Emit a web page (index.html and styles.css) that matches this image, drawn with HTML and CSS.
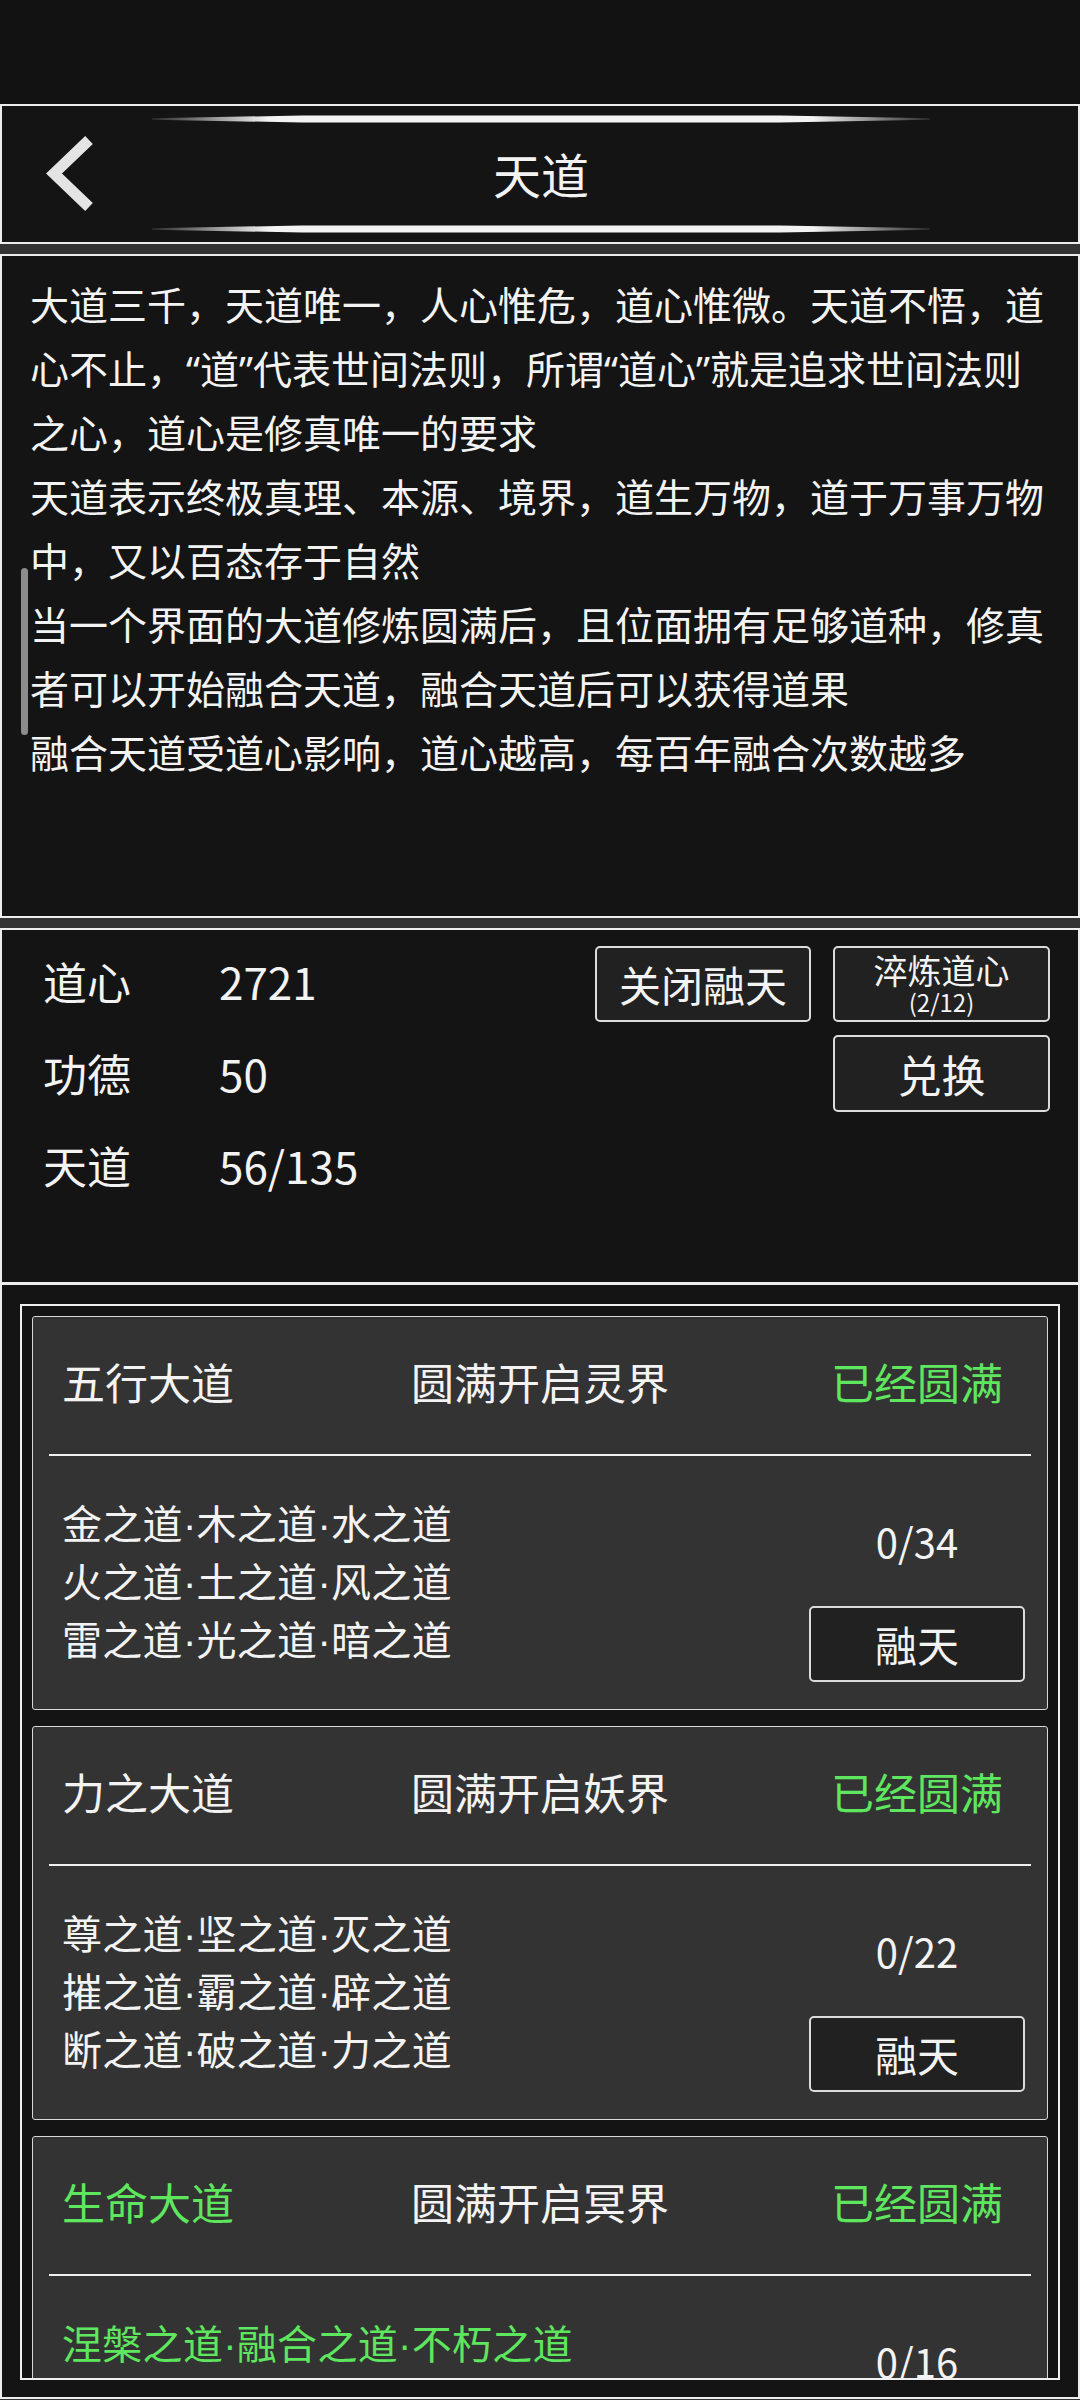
FILE: index.html
```html
<!DOCTYPE html>
<html lang="zh-CN">
  <head>
    <meta charset="utf-8" />
    <title>天道</title>
    <meta name="viewport" content="width=device-width, initial-scale=1" />
    <link rel="stylesheet" href="styles.css">
  </head>
  <body>
    <div class="status-bar"></div>

    <header class="panel title-bar">
      <button class="back" aria-label="返回">
        <svg width="50" height="76" viewBox="0 0 50 76">
          <polyline points="44,4 9,37.5 44,71" fill="none" stroke="#e4e4e4" stroke-width="11" />
        </svg>
      </button>
      <div class="title-center">
        <svg class="glow-line" width="778" height="8" viewBox="0 0 778 8">
          <defs>
            <linearGradient id="glow" x1="0" x2="1" y1="0" y2="0">
              <stop offset="0" stop-color="#fff" stop-opacity="0.1" />
              <stop offset="0.15" stop-color="#fff" stop-opacity="0.95" />
              <stop offset="0.85" stop-color="#fff" stop-opacity="0.95" />
              <stop offset="1" stop-color="#fff" stop-opacity="0.1" />
            </linearGradient>
          </defs>
          <polygon points="0,3.3 150,0.5 628,0.5 778,3.3 778,4.7 628,7.5 150,7.5 0,4.7" fill="url(#glow)" />
        </svg>
        <h1>天道</h1>
        <svg class="glow-line" width="778" height="8" viewBox="0 0 778 8">
          <polygon points="0,3.3 150,0.5 628,0.5 778,3.3 778,4.7 628,7.5 150,7.5 0,4.7" fill="url(#glow)" />
        </svg>
      </div>
    </header>

    <section class="panel lore">
      <p>大道三千，天道唯一，人心惟危，道心惟微。天道不悟，道心不止，“道”代表世间法则，所谓“道心”就是追求世间法则之心，道心是修真唯一的要求</p>
      <p>天道表示终极真理、本源、境界，道生万物，道于万事万物中，又以百态存于自然</p>
      <p>当一个界面的大道修炼圆满后，且位面拥有足够道种，修真者可以开始融合天道，融合天道后可以获得道果</p>
      <p>融合天道受道心影响，道心越高，每百年融合次数越多</p>
      <div class="scroll-thumb"></div>
    </section>

    <section class="panel stats">
      <dl class="stat-list">
        <dt>道心</dt><dd>2721</dd>
        <dt>功德</dt><dd>50</dd>
        <dt>天道</dt><dd>56/135</dd>
      </dl>
      <div class="stat-actions">
        <button class="btn btn-close">关闭融天</button>
        <button class="btn btn-refine"><span>淬炼道心</span><small>(2/12)</small></button>
        <button class="btn btn-exchange">兑换</button>
      </div>
    </section>

    <section class="panel dao-list">
      <div class="dao-frame">
        <div class="dao-card">
          <div class="dao-head">
            <span class="dao-name">五行大道</span>
            <span class="dao-goal">圆满开启灵界</span>
            <span class="dao-state">已经圆满</span>
          </div>
          <div class="dao-rule"></div>
          <div class="dao-body">
            <div class="dao-paths">
              <div>金之道·木之道·水之道</div>
              <div>火之道·土之道·风之道</div>
              <div>雷之道·光之道·暗之道</div>
            </div>
            <div class="dao-side">
              <span class="dao-count">0/34</span>
              <button class="btn btn-fuse">融天</button>
            </div>
          </div>
        </div>

        <div class="dao-card">
          <div class="dao-head">
            <span class="dao-name">力之大道</span>
            <span class="dao-goal">圆满开启妖界</span>
            <span class="dao-state">已经圆满</span>
          </div>
          <div class="dao-rule"></div>
          <div class="dao-body">
            <div class="dao-paths">
              <div>尊之道·坚之道·灭之道</div>
              <div>摧之道·霸之道·辟之道</div>
              <div>断之道·破之道·力之道</div>
            </div>
            <div class="dao-side">
              <span class="dao-count">0/22</span>
              <button class="btn btn-fuse">融天</button>
            </div>
          </div>
        </div>

        <div class="dao-card">
          <div class="dao-head">
            <span class="dao-name is-green">生命大道</span>
            <span class="dao-goal">圆满开启冥界</span>
            <span class="dao-state">已经圆满</span>
          </div>
          <div class="dao-rule"></div>
          <div class="dao-body">
            <div class="dao-paths is-green">
              <div>涅槃之道·融合之道·不朽之道</div>
            </div>
            <div class="dao-side">
              <span class="dao-count">0/16</span>
              <button class="btn btn-fuse">融天</button>
            </div>
          </div>
        </div>
      </div>
    </section>
  </body>
</html>
```

FILE: styles.css
```css
html {
  background: #333;
}

body {
  margin: 0;
  height: 2400px;
  overflow: hidden;
  font-family: "Noto Sans CJK SC", "Noto Sans", sans-serif;
  color: #f3f3f3;
  background: #333;
}

.status-bar {
  height: 104px;
  background: #121212;
}

.panel {
  box-sizing: border-box;
  background: #141414;
  border: 2px solid #ededed;
}

/* header */

.title-bar {
  height: 140px;
  margin-bottom: 10px;
  display: grid;
  grid-template-columns: 150px 778px 1fr;
  align-items: center;
}

.back {
  margin: 0 0 0 43px;
  padding: 0;
  border: 0;
  background: none;
  width: 50px;
  height: 76px;
}

.back svg {
  display: block;
}

.title-center {
  align-self: stretch;
  box-sizing: border-box;
  padding: 9px 0;
  display: flex;
  flex-direction: column;
  justify-content: space-between;
  align-items: center;
}

.glow-line {
  display: block;
}

.title-center h1 {
  margin: 0 0 3px;
  font-size: 48px;
  font-weight: 400;
  line-height: 1;
}

/* description: western font first so the quotes stay narrow */

.lore {
  position: relative;
  height: 664px;
  margin-bottom: 10px;
  padding: 17px 28px 0;
  font-family: "Noto Sans", "Noto Sans CJK SC", sans-serif;
  font-size: 39px;
  line-height: 64px;
}

.lore p {
  margin: 0;
}

.scroll-thumb {
  position: absolute;
  left: 19px;
  top: 312px;
  width: 7px;
  height: 167px;
  border-radius: 4px;
  background: #8c8c8c;
}

/* stats */

.stats {
  height: 356px;
  padding: 9px 28px 0 41px;
  display: flex;
  justify-content: space-between;
  align-items: flex-start;
}

.stat-list {
  margin: -4px 0 0;
  display: grid;
  grid-template-columns: 176px auto;
  grid-auto-rows: 92px;
  align-items: center;
  font-size: 44px;
  line-height: 1;
}

.stat-list dt,
.stat-list dd {
  margin: 0;
}

.stat-actions {
  margin-top: 7px;
  display: grid;
  grid-template-columns: 216px 217px;
  grid-template-rows: 76px 77px;
  column-gap: 22px;
  row-gap: 13px;
}

.btn {
  box-sizing: border-box;
  margin: 0;
  padding: 0;
  border: 2px solid #dcdcdc;
  border-radius: 5px;
  background: #212121;
  color: #f3f3f3;
  font-family: inherit;
  line-height: 1;
  display: flex;
  flex-direction: column;
  align-items: center;
  justify-content: center;
}

.btn-close {
  grid-row: 1;
  grid-column: 1;
  font-size: 42px;
}

.btn-refine {
  grid-row: 1;
  grid-column: 2;
}

.btn-refine span {
  font-size: 34px;
  line-height: 36px;
}

.btn-refine small {
  font-size: 24px;
  line-height: 28px;
}

.btn-exchange {
  grid-row: 2;
  grid-column: 2;
  font-size: 44px;
}

/* dao list */

.dao-list {
  height: 1115px;
  border-top-width: 1px;
  padding: 19px 18px 0;
}

.dao-frame {
  box-sizing: border-box;
  height: 1076px;
  border: 2px solid #f0f0f0;
  padding: 10px;
  overflow: hidden;
  display: flex;
  flex-direction: column;
  gap: 16px;
}

.dao-card {
  flex: none;
  background: #333;
  border: 1px solid #d8d8d8;
  border-radius: 3px;
  padding: 0 16px;
}

.dao-head {
  box-sizing: border-box;
  height: 137px;
  padding-bottom: 8px;
  display: grid;
  grid-template-columns: 1fr auto 1fr;
  align-items: center;
  font-size: 43px;
  line-height: 1;
}

.dao-name {
  padding-left: 13px;
}

.dao-state {
  justify-self: end;
  width: 216px;
  margin-right: 6px;
  text-align: center;
  color: #5fe65f;
}

.is-green {
  color: #5fe65f;
}

.dao-rule {
  height: 2px;
  background: #f0f0f0;
}

.dao-body {
  display: grid;
  grid-template-columns: 1fr 216px;
  padding-right: 6px;
}

/* latin font first: the CJK middle dot is a full em wide */
.dao-paths {
  padding: 40px 0 0 13px;
  font-family: "Liberation Sans", "Noto Sans CJK SC", sans-serif;
  font-size: 40px;
  line-height: 58px;
  letter-spacing: 0.3px;
}

.dao-side {
  padding: 56px 0 27px;
  display: flex;
  flex-direction: column;
  align-items: center;
}

.dao-count {
  font-size: 40px;
  line-height: 58px;
}

.btn-fuse {
  margin-top: 36px;
  width: 216px;
  height: 76px;
  font-size: 42px;
}
```
